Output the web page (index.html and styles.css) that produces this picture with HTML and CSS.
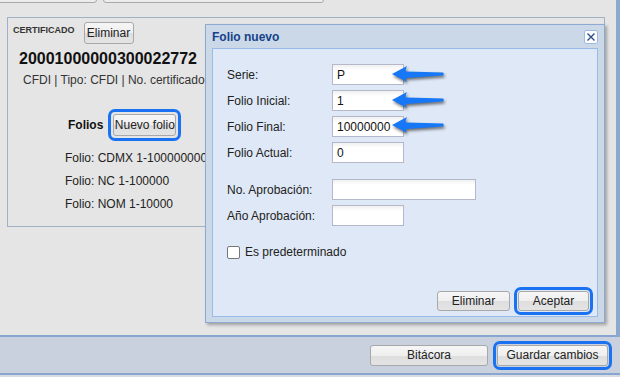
FILE: index.html
```html
<!DOCTYPE html>
<html lang="es">
  <head>
    <meta charset="UTF-8" />
    <meta name="viewport" content="width=device-width, initial-scale=1.0" />
    <title>Folio nuevo</title>
    <link rel="stylesheet" href="styles.css">
  </head>
  <body>
    <div class="workspace">
      <div class="top-stub">
        <span class="stub-btn stub-a"></span>
        <span class="stub-btn stub-b"></span>
      </div>

      <section class="cert-panel">
        <div class="cert-head">
          <span class="cert-title">CERTIFICADO</span>
          <button class="btn btn-cert">Eliminar</button>
        </div>
        <div class="cert-number">20001000000300022772</div>
        <div class="cert-meta">CFDI | Tipo: CFDI | No. certificado</div>
        <div class="folios-head">
          <span class="folios-label">Folios</span>
          <span class="focus-ring ring-wide"><button class="btn btn-new">Nuevo folio</button></span>
        </div>
        <ul class="folio-list">
          <li>Folio: CDMX 1-1000000000</li>
          <li>Folio: NC 1-100000</li>
          <li>Folio: NOM 1-10000</li>
        </ul>
      </section>

      <!-- modal window over the panel -->
      <div class="dialog">
        <div class="dialog-head">
          <span class="dialog-title">Folio nuevo</span>
          <span class="dialog-close">
            <svg width="10" height="10" viewBox="0 0 10 10">
              <path d="M1.5 1.5 L8.5 8.5 M8.5 1.5 L1.5 8.5" stroke="#2b4f8c" stroke-width="1.4" fill="none" />
            </svg>
          </span>
        </div>
        <div class="dialog-body">
          <div class="form-row">
            <label>Serie:</label>
            <input class="field" type="text" value="P" />
          </div>
          <div class="form-row">
            <label>Folio Inicial:</label>
            <input class="field" type="text" value="1" />
          </div>
          <div class="form-row">
            <label>Folio Final:</label>
            <input class="field" type="text" value="10000000" />
          </div>
          <div class="form-row">
            <label>Folio Actual:</label>
            <input class="field" type="text" value="0" />
          </div>
          <div class="form-row row-spaced">
            <label>No. Aprobación:</label>
            <input class="field field-wide" type="text" value="" />
          </div>
          <div class="form-row">
            <label>Año Aprobación:</label>
            <input class="field" type="text" value="" />
          </div>
          <div class="check-row">
            <input class="check" type="checkbox" />
            <span>Es predeterminado</span>
          </div>
          <div class="dialog-actions">
            <button class="btn btn-del">Eliminar</button>
            <span class="focus-ring"><button class="btn btn-ok">Aceptar</button></span>
          </div>
        </div>
      </div>

      <svg class="pointer pointer-1" width="58" height="24" viewBox="0 0 58 24">
        <path d="M4 11 L19 3 Q17 7 18 8.5 L55 9.5 Q56.5 11 55 12.5 L18 15 Q17 17 19 19 Z" fill="#1677f7" />
      </svg>
      <svg class="pointer pointer-2" width="58" height="24" viewBox="0 0 58 24">
        <path d="M4 11 L19 3 Q17 7 18 8.5 L55 9.5 Q56.5 11 55 12.5 L18 15 Q17 17 19 19 Z" fill="#1677f7" />
      </svg>
      <svg class="pointer pointer-3" width="58" height="24" viewBox="0 0 58 24">
        <path d="M4 11 L19 3 Q17 7 18 8.5 L55 9.5 Q56.5 11 55 12.5 L18 15 Q17 17 19 19 Z" fill="#1677f7" />
      </svg>
    </div>

    <div class="footer-bar">
      <button class="btn btn-log">Bitácora</button>
      <span class="focus-ring"><button class="btn btn-save">Guardar cambios</button></span>
    </div>
    <div class="footer-edge"></div>
  </body>
</html>
```

FILE: styles.css
```css
body {
  margin: 0;
  font-family: "Liberation Sans", Arial, sans-serif;
  font-size: 12px;
  color: #222;
  background-color: #e5e5e5;
  overflow: hidden;
}

.workspace {
  position: relative;
  height: 335px;
  border-right: 4px solid #8ca8cf;
}

.top-stub {
  display: flex;
  align-items: flex-end;
  gap: 6px;
  height: 3px;
  overflow: hidden;
}

.stub-btn {
  flex: none;
  height: 20px;
  border: 1px solid #a9a9a9;
  border-radius: 3px;
  background-color: #ececec;
}

.stub-a {
  width: 97px;
  margin-left: -2px;
}

.stub-b {
  width: 219px;
}

.btn {
  height: 21px;
  padding: 0;
  border: 1px solid #a8a8a8;
  border-radius: 3px;
  background: linear-gradient(#f6f6f6 0%, #efefef 50%, #dedede 52%, #e4e4e4 100%);
  font-family: "Liberation Sans", Arial, sans-serif;
  font-size: 12px;
  color: #222;
}

.focus-ring {
  display: inline-flex;
  padding: 1px;
  border: 3px solid #1a72f2;
  border-radius: 7px;
}

.ring-wide {
  padding: 2px;
}

/* certificate panel */

.cert-panel {
  box-sizing: border-box;
  width: 598px;
  height: 210px;
  margin: 14px 0 0 7px;
  border: 1px solid #a2b0c6;
}

.cert-head {
  display: flex;
  align-items: flex-start;
  gap: 9px;
  padding: 4px 0 0 5px;
}

.cert-title {
  margin-top: 3px;
  font-size: 9px;
  font-weight: bold;
  color: #333;
}

.btn-cert {
  width: 50px;
  height: 22px;
}

.cert-number {
  margin: 5px 0 0 11px;
  font-size: 16px;
  line-height: 20px;
  font-weight: bold;
  color: #111;
}

.cert-meta {
  margin: 3px 0 0 15px;
  line-height: 16px;
  color: #333;
  white-space: nowrap;
}

.folios-head {
  display: flex;
  align-items: center;
  gap: 5px;
  margin: 21px 0 0 60px;
}

.folios-label {
  font-weight: bold;
  color: #111;
}

.btn-new {
  width: 63px;
  height: 22px;
}

.folio-list {
  margin: 6px 0 0;
  padding: 0 0 0 57px;
  list-style: none;
  line-height: 23px;
  white-space: nowrap;
}

/* dialog */

.dialog {
  position: absolute;
  left: 205px;
  top: 24px;
  box-sizing: border-box;
  width: 400px;
  height: 299px;
  border: 1px solid #8eaad2;
  background-color: #cbd8e8;
  box-shadow: 2px 2px 3px rgba(0, 0, 0, 0.3);
  display: flex;
  flex-direction: column;
}

.dialog-head {
  display: flex;
  align-items: center;
  justify-content: space-between;
  height: 23px;
  padding: 0 6px;
}

.dialog-title {
  font-weight: bold;
  color: #15428b;
}

.dialog-close {
  display: flex;
  align-items: center;
  justify-content: center;
  box-sizing: border-box;
  width: 14px;
  height: 14px;
  border: 1px solid #9dbbe6;
  border-radius: 2px;
  background-color: #fff;
}

.dialog-body {
  flex: 1;
  display: flex;
  flex-direction: column;
  margin: 0 6px 5px;
  padding: 15px 4px 1px 14px;
  border: 1px solid #99bbe8;
  background-color: #dfe8f6;
}

.form-row {
  display: flex;
  align-items: center;
  height: 21px;
  margin-bottom: 5px;
}

.form-row label {
  width: 105px;
}

.row-spaced {
  margin-top: 11px;
}

.field {
  box-sizing: border-box;
  width: 72px;
  height: 21px;
  padding: 0 4px;
  border: 1px solid #b5b8c8;
  background: linear-gradient(#f0f0f0, #fff 5px);
  font-family: "Liberation Sans", Arial, sans-serif;
  font-size: 12px;
  color: #111;
}

.field-wide {
  width: 144px;
}

.check-row {
  display: flex;
  align-items: center;
  gap: 5px;
  margin-top: 14px;
}

.check {
  appearance: none;
  box-sizing: border-box;
  width: 13px;
  height: 13px;
  margin: 0;
  border: 1px solid #777;
  border-radius: 2px;
  background-color: #fff;
}

.dialog-actions {
  display: flex;
  align-items: center;
  justify-content: flex-end;
  gap: 4px;
  margin-top: auto;
}

.btn-del {
  width: 73px;
  height: 20px;
}

.btn-ok {
  width: 71px;
  height: 20px;
}

/* callout arrows */

.pointer {
  position: absolute;
  filter: drop-shadow(1px 2px 1.5px rgba(0, 0, 0, 0.55));
}

.pointer-1 {
  left: 388px;
  top: 63px;
}

.pointer-2 {
  left: 388px;
  top: 89px;
}

.pointer-3 {
  left: 388px;
  top: 114px;
}

/* footer */

.footer-bar {
  display: flex;
  align-items: center;
  justify-content: flex-end;
  gap: 5px;
  height: 36px;
  padding-right: 8px;
  border-top: 2px solid #88a6d0;
  border-bottom: 2px solid #88a6d0;
  background-color: #c9d1df;
}

.btn-log {
  width: 118px;
}

.btn-save {
  width: 111px;
}

.footer-edge {
  height: 2px;
  background-color: #d6dbe4;
}
```
